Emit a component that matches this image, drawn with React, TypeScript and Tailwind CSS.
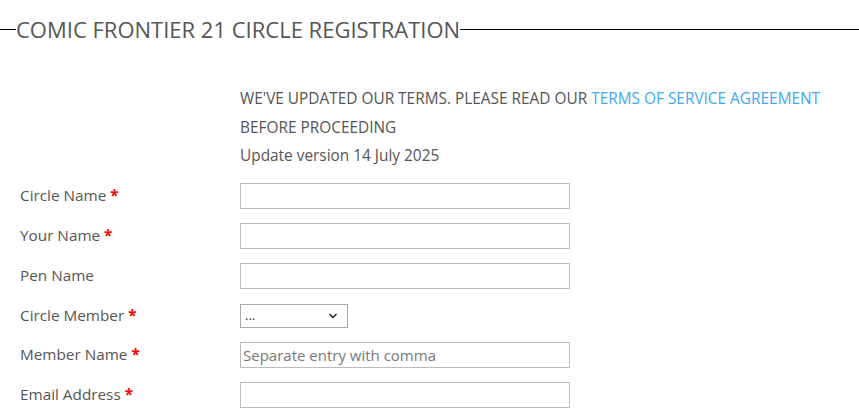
import { ChevronDown } from 'lucide-react'

const fields = [
  { label: 'Circle Name', required: true, kind: 'text' },
  { label: 'Your Name', required: true, kind: 'text' },
  { label: 'Pen Name', required: false, kind: 'text' },
  { label: 'Circle Member', required: true, kind: 'select' },
  { label: 'Member Name', required: true, kind: 'text', placeholder: 'Separate entry with comma' },
  { label: 'Email Address', required: true, kind: 'text' },
]

export default function App() {
  return (
    <div className="min-h-screen w-full bg-white text-[#555] font-['Open_Sans',sans-serif]">
      {/* Legend-style header */}
      <div className="flex items-center pt-[16px]">
        <div className="w-4 h-px bg-black" />
        <h1 className="text-[22px] leading-[26px] font-normal text-[#555] uppercase">
          Comic Frontier 21 Circle Registration
        </h1>
        <div className="flex-1 h-px bg-black" />
      </div>

      <div className="pl-[240px] pt-[43px] text-[15.4px] leading-[28.5px]">
        <p className="uppercase">
          We've updated our terms. Please read our{' '}
          <a className="text-[#3fa9f5]">Terms of Service Agreement</a>
        </p>
        <p className="uppercase">Before proceeding</p>
        <p>Update version 14 July 2025</p>
      </div>

      <div className="flex flex-col gap-[14px] pt-[12px] text-[15.3px]">
        {fields.map((f, i) => (
          <div key={f.label} className={`flex items-center h-[26px] ${i === 4 ? '-mt-px' : ''}`}>
            <label className="w-[240px] pl-5 text-[#555]">
              {f.label}
              {f.required && <span className="text-[#f00] font-bold"> *</span>}
            </label>
            {f.kind === 'select' ? (
              <div className="w-[108px] h-6 border border-[#aaa] flex items-center justify-between pl-1 pr-2 text-[13px] text-[#333]">
                <span>...</span>
                <ChevronDown className="w-3 h-3 text-[#333]" strokeWidth={3.5} />
              </div>
            ) : (
              <input
                className="w-[330px] h-[26px] border border-[#bbb] px-[2px] text-[15px] outline-none placeholder:text-[#777]"
                placeholder={f.placeholder}
              />
            )}
          </div>
        ))}
      </div>
    </div>
  )
}
